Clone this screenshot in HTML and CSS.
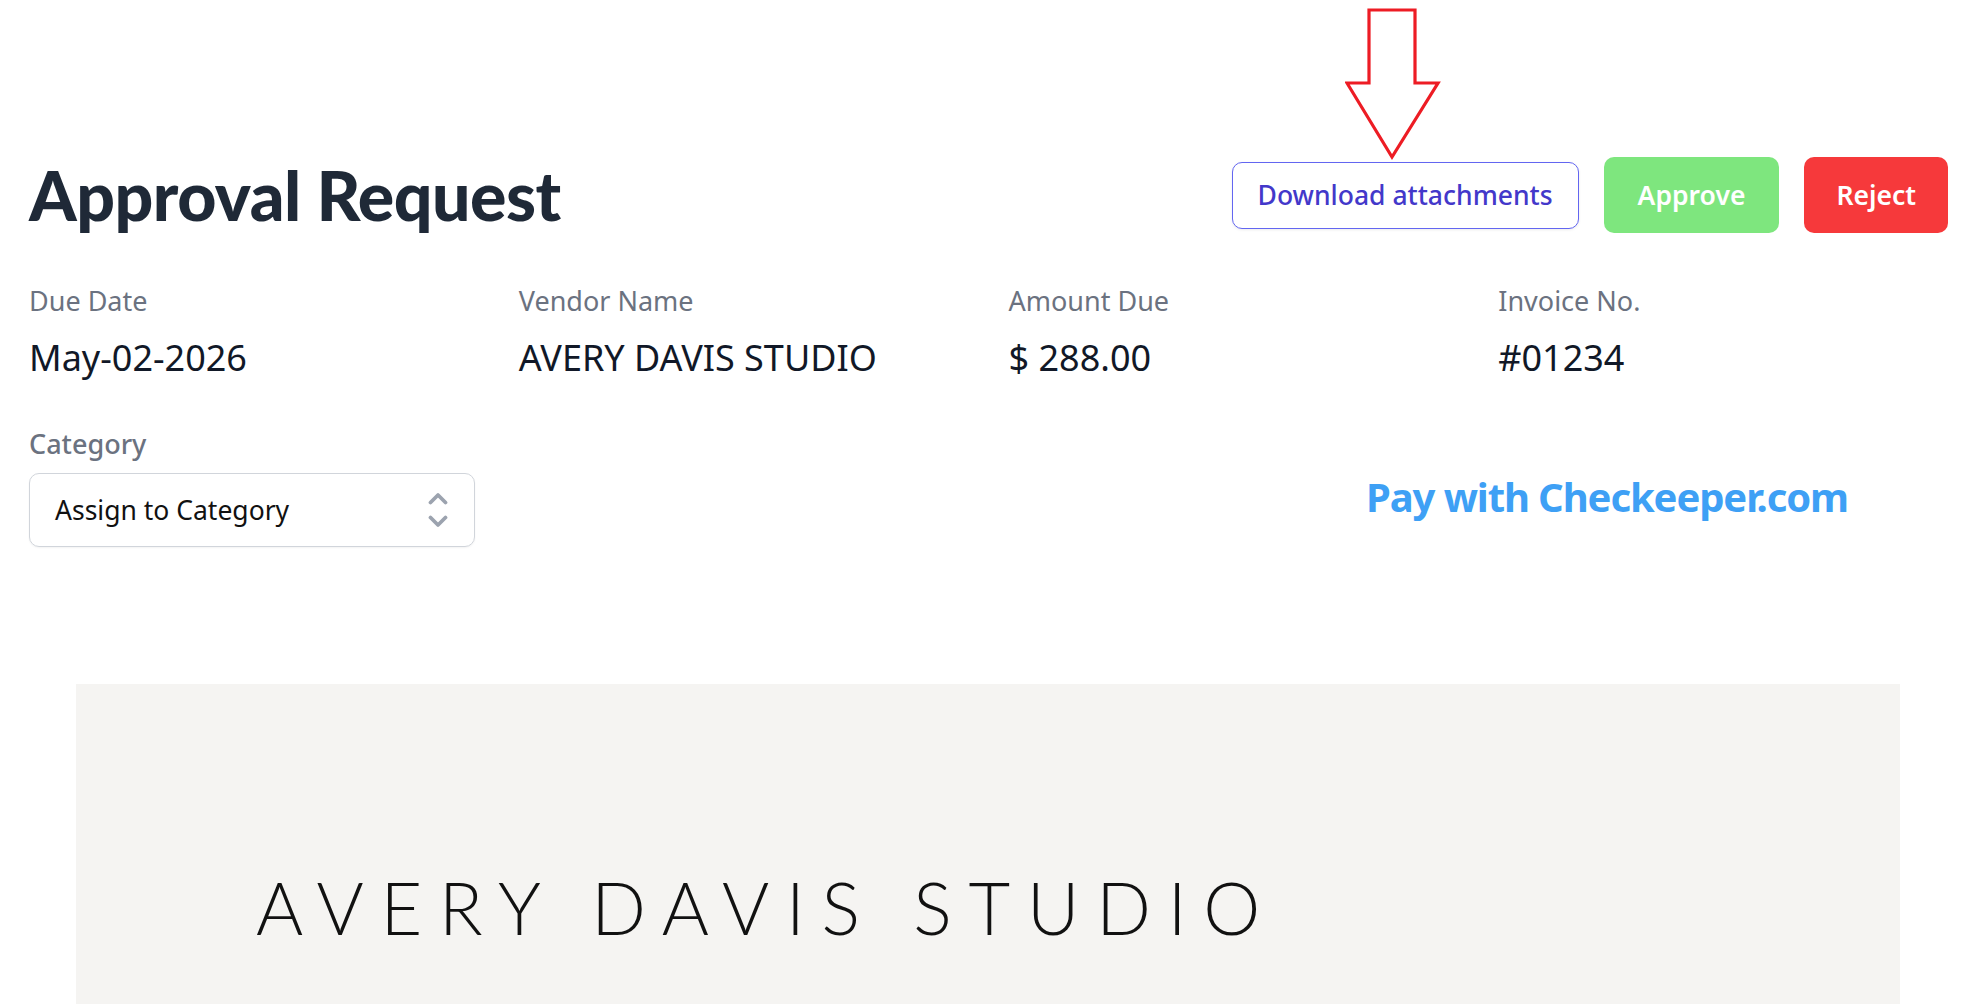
FILE: index.html
```html
<!DOCTYPE html>
<html lang="en">
<head>
<meta charset="utf-8">
<title>Approval Request</title>
<link rel="stylesheet" href="styles.css">
</head>
<body>
<div class="page">
  <svg class="annot-arrow" width="100" height="156" viewBox="0 0 100 156" aria-hidden="true">
    <polygon points="24,3 70,3 70,76 93,76 47,150 2,76 24,76" fill="#ffffff" stroke="#ed1c24" stroke-width="3.2" stroke-linejoin="miter"/>
  </svg>

  <header class="header">
    <h1 class="title">Approval Request</h1>
    <div class="actions">
      <button class="btn btn-outline">Download attachments</button>
      <button class="btn btn-approve">Approve</button>
      <button class="btn btn-reject">Reject</button>
    </div>
  </header>

  <section class="info-grid">
    <div class="field">
      <div class="label">Due Date</div>
      <div class="value">May-02-2026</div>
    </div>
    <div class="field">
      <div class="label">Vendor Name</div>
      <div class="value">AVERY DAVIS STUDIO</div>
    </div>
    <div class="field">
      <div class="label">Amount Due</div>
      <div class="value">$ 288.00</div>
    </div>
    <div class="field">
      <div class="label">Invoice No.</div>
      <div class="value">#01234</div>
    </div>
  </section>

  <section class="category-row">
    <div class="category">
      <div class="category-label">Category</div>
      <div class="select">
        <span class="select-text">Assign to Category</span>
        <svg class="select-icon" width="50" height="50" viewBox="0 0 20 20" fill="none" aria-hidden="true">
          <path d="M7 7l3-3 3 3m0 6l-3 3-3-3" stroke="#9ca3af" stroke-width="1.5" stroke-linecap="round" stroke-linejoin="round"/>
        </svg>
      </div>
    </div>
    <div class="pay-link">Pay with Checkeeper.com</div>
  </section>

  <section class="attachment">
    <div class="logo-text">AVERY DAVIS STUDIO</div>
  </section>
</div>
</body>
</html>
```

FILE: styles.css
```css
* {
  box-sizing: border-box;
}

html, body {
  margin: 0;
  padding: 0;
  background: #ffffff;
  overflow: hidden;
}

body {
  font-family: "Noto Sans", "Open Sans", sans-serif;
  color: #111827;
}

.page {
  position: relative;
  padding: 155px 16px 0 29px;
  height: 1004px;
}

.annot-arrow {
  position: absolute;
  left: 1345px;
  top: 7px;
}

.header {
  display: flex;
  align-items: center;
  justify-content: space-between;
  height: 80px;
}

.title {
  margin: 0;
  font-family: "Lato", "Noto Sans", sans-serif;
  font-size: 68px;
  line-height: 80px;
  font-weight: 900;
  color: #1f2937;
  letter-spacing: -0.5px;
}

.actions {
  display: flex;
  align-items: center;
  gap: 25px;
}

.btn {
  font-family: inherit;
  font-size: 26.5px;
  border-radius: 10px;
  cursor: pointer;
  display: flex;
  align-items: center;
  justify-content: center;
}

.btn-outline {
  height: 67px;
  padding: 0 25px;
  background: #ffffff;
  border: 1.5px solid #6366f1;
  color: #4338ca;
  font-weight: 500;
  box-shadow: 0 1px 3px rgba(0, 0, 0, 0.08);
}

.btn-approve {
  height: 76px;
  padding: 0 34px;
  background: #7ee67e;
  border: none;
  color: #ffffff;
  font-weight: 600;
}

.btn-reject {
  height: 76px;
  padding: 0 32px;
  background: #f6393b;
  border: none;
  color: #ffffff;
  font-weight: 600;
}

.info-grid {
  display: grid;
  grid-template-columns: repeat(4, 1fr);
  column-gap: 40px;
  margin-top: 46px;
}

.label {
  font-size: 27px;
  line-height: 40px;
  color: #6b7280;
}

.value {
  margin-top: 13px;
  font-size: 36px;
  line-height: 48px;
  color: #111827;
}

.category-row {
  display: flex;
  align-items: center;
  justify-content: space-between;
  margin-top: 42px;
}

.category-label {
  font-size: 27px;
  line-height: 40px;
  font-weight: 500;
  color: #6b7280;
}

.select {
  margin-top: 9px;
  width: 446px;
  height: 74px;
  border: 1.5px solid #d1d5db;
  border-radius: 10px;
  box-shadow: 0 1px 2px rgba(0, 0, 0, 0.05);
  display: flex;
  align-items: center;
  justify-content: space-between;
  padding: 0 11px 0 25px;
}

.select-text {
  font-size: 26.5px;
  color: #111111;
}

.pay-link {
  margin-top: 23px;
  margin-right: 100px;
  font-size: 40px;
  line-height: 56px;
  font-weight: 700;
  letter-spacing: -1.1px;
  color: #3ea0f5;
}

.attachment {
  margin: 137px 48px 0 47px;
  height: 400px;
  background: #f5f4f2;
  padding: 180px 0 0 180px;
}

.logo-text {
  font-family: "Lato", "Open Sans", sans-serif;
  font-weight: 300;
  font-size: 72px;
  line-height: 86px;
  letter-spacing: 16.8px;
  color: #111111;
}
```
